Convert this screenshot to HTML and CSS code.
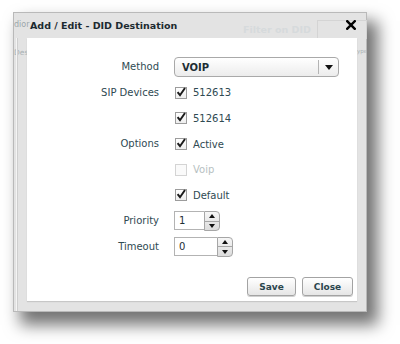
FILE: index.html
```html
<!DOCTYPE html>
<html>
<head>
<meta charset="utf-8">
<link rel="stylesheet" href="styles.css">
</head>
<body>
<div class="dialog">
  <span class="ghost ghost-dior">dior</span>
  <span class="ghost ghost-filter">Filter on DID</span>
  <span class="ghost-box"></span>
  <span class="ghost ghost-des">Des</span>
  <span class="ghost ghost-ype">ype</span>
  <span class="ghost-line"></span>
  <div class="titlebar">
    <span class="title">Add / Edit - DID Destination</span>
    <span class="close"><svg width="10" height="10" viewBox="0 0 10 10"><path d="M1.2 1.2 L8.8 8.8 M8.8 1.2 L1.2 8.8" stroke="#000" stroke-width="2.4" stroke-linecap="square"/></svg></span>
  </div>
  <div class="content">
    <div class="form">
      <div class="label">Method</div>
      <div class="control">
        <div class="select">
          <span class="select-value">VOIP</span>
          <span class="select-arrow"><svg width="8" height="5" viewBox="0 0 8 5"><path d="M0 0 H8 L4 5 Z" fill="#111"/></svg></span>
        </div>
      </div>

      <div class="label">SIP Devices</div>
      <div class="control check-row">
        <span class="checkbox"><svg width="12" height="12" viewBox="0 0 12 12"><path d="M2.6 6.2 L5 9.2 L10 2" fill="none" stroke="#1b1b1b" stroke-width="2"/></svg></span>
        <span class="check-text">512613</span>
      </div>

      <div class="label"></div>
      <div class="control check-row">
        <span class="checkbox"><svg width="12" height="12" viewBox="0 0 12 12"><path d="M2.6 6.2 L5 9.2 L10 2" fill="none" stroke="#1b1b1b" stroke-width="2"/></svg></span>
        <span class="check-text">512614</span>
      </div>

      <div class="label">Options</div>
      <div class="control check-row">
        <span class="checkbox"><svg width="12" height="12" viewBox="0 0 12 12"><path d="M2.6 6.2 L5 9.2 L10 2" fill="none" stroke="#1b1b1b" stroke-width="2"/></svg></span>
        <span class="check-text">Active</span>
      </div>

      <div class="label"></div>
      <div class="control check-row disabled">
        <span class="checkbox"></span>
        <span class="check-text">Voip</span>
      </div>

      <div class="label"></div>
      <div class="control check-row">
        <span class="checkbox"><svg width="12" height="12" viewBox="0 0 12 12"><path d="M2.6 6.2 L5 9.2 L10 2" fill="none" stroke="#1b1b1b" stroke-width="2"/></svg></span>
        <span class="check-text">Default</span>
      </div>

      <div class="label">Priority</div>
      <div class="control">
        <div class="spinner spinner-priority">
          <span class="spin-input">1</span>
          <span class="spin-buttons">
            <span class="spin-btn"><svg width="6" height="4" viewBox="0 0 6 4"><path d="M0 4 H6 L3 0 Z" fill="#111"/></svg></span>
            <span class="spin-btn"><svg width="6" height="4" viewBox="0 0 6 4"><path d="M0 0 H6 L3 4 Z" fill="#111"/></svg></span>
          </span>
        </div>
      </div>

      <div class="label">Timeout</div>
      <div class="control">
        <div class="spinner spinner-timeout">
          <span class="spin-input">0</span>
          <span class="spin-buttons">
            <span class="spin-btn"><svg width="6" height="4" viewBox="0 0 6 4"><path d="M0 4 H6 L3 0 Z" fill="#111"/></svg></span>
            <span class="spin-btn"><svg width="6" height="4" viewBox="0 0 6 4"><path d="M0 0 H6 L3 4 Z" fill="#111"/></svg></span>
          </span>
        </div>
      </div>
    </div>
    <div class="actions">
      <button class="btn btn-save">Save</button>
      <button class="btn btn-close">Close</button>
    </div>
  </div>
</div>
</body>
</html>
```

FILE: styles.css
```css
html, body {
  margin: 0;
  padding: 0;
  background: #ffffff;
}

body {
  font-family: "DejaVu Sans", Verdana, sans-serif;
  font-size: 10px;
  color: #2f4a52;
  width: 400px;
  height: 344px;
  overflow: hidden;
}

.dialog {
  position: relative;
  box-sizing: border-box;
  margin: 12px 0 0 13px;
  width: 354px;
  height: 300px;
  background: #e3e3e3;
  border: 1px solid #b9b9b9;
  display: flex;
  flex-direction: column;
  box-shadow: 9px 11px 15px 2px rgba(0, 0, 0, 0.55);
}

/* faint content of the page beneath, seen through the frame */
.ghost {
  position: absolute;
  white-space: nowrap;
}
.ghost-dior {
  left: 0;
  top: 7px;
  font-size: 8px;
  color: #9ba6aa;
}
.ghost-filter {
  left: 229px;
  top: 11px;
  font-size: 9.5px;
  color: #d6dadc;
  font-weight: bold;
}
.ghost-box {
  position: absolute;
  left: 303px;
  top: 7px;
  width: 48px;
  height: 18px;
  border: 1px solid #d4d4d4;
  border-bottom: none;
}
.ghost-des {
  left: 0;
  top: 35px;
  font-size: 7.5px;
  color: #a9b1b4;
}
.ghost-ype {
  left: 343px;
  top: 35px;
  font-size: 5.5px;
  color: #aab2b5;
}
.ghost-line {
  position: absolute;
  left: 2px;
  top: 25px;
  bottom: 0;
  width: 1px;
  background: #f4f4f4;
  border-right: 1px solid #cfcfcf;
}

.titlebar {
  position: relative;
  height: 25px;
  display: flex;
  align-items: center;
  justify-content: space-between;
  padding: 0 10px 0 16px;
  box-sizing: border-box;
}

.title {
  font-size: 9.5px;
  font-weight: bold;
  color: #1c2a30;
}

.close {
  display: flex;
  width: 10px;
  height: 10px;
  margin-top: -2px;
}

.content {
  position: relative;
  flex: 1;
  margin: 0 9px 10px 13px;
  background: #ffffff;
  display: flex;
  flex-direction: column;
  box-shadow: 0 1px 1px rgba(0, 0, 0, 0.12);
}

.form {
  display: grid;
  grid-template-columns: 132px 1fr;
  column-gap: 15px;
  row-gap: 5.7px;
  padding-top: 19px;
}

.label {
  text-align: right;
  height: 20px;
  line-height: 20px;
  color: #2f4a52;
}

.control {
  height: 20px;
  display: flex;
  align-items: center;
}

.select {
  box-sizing: border-box;
  width: 165px;
  height: 20px;
  border: 1px solid #a9a9a9;
  border-radius: 4px;
  background: linear-gradient(#ffffff, #ececec);
  display: flex;
  align-items: center;
}

.select-value {
  flex: 1;
  padding-left: 7px;
  font-weight: bold;
  color: #1e2e34;
  font-size: 10px;
}

.select-arrow {
  width: 19px;
  height: 14px;
  border-left: 1px solid #b4b4b4;
  display: flex;
  align-items: center;
  justify-content: center;
}

.check-row {
  gap: 6px;
}

.checkbox {
  box-sizing: border-box;
  width: 12px;
  height: 12px;
  margin-left: 1px;
  border: 1px solid #9c9c9c;
  background: linear-gradient(#ffffff, #eeeeee);
  display: flex;
  align-items: center;
  justify-content: center;
  position: relative;
}

.checkbox svg {
  position: absolute;
  left: -1px;
  top: -2px;
}

.check-text {
  color: #2f4a52;
}

.disabled .checkbox {
  border-color: #d4d4d4;
  background: #fafafa;
}

.disabled .check-text {
  color: #b7bfc2;
}

.spinner {
  display: flex;
  height: 20px;
}

.spin-input {
  box-sizing: border-box;
  height: 19px;
  border: 1px solid #b3b3b3;
  border-right: none;
  padding-left: 4px;
  line-height: 17px;
  color: #1e2e34;
  background: #ffffff;
}

.spinner-priority .spin-input {
  width: 30px;
}

.spinner-timeout .spin-input {
  width: 43px;
}

.spin-buttons {
  box-sizing: border-box;
  width: 16px;
  height: 20px;
  border: 1px solid #a6a6a6;
  border-radius: 0 4px 4px 0;
  background: linear-gradient(#f6f6f6, #dcdcdc);
  display: flex;
  flex-direction: column;
  overflow: hidden;
}

.spin-btn {
  flex: 1;
  display: flex;
  align-items: center;
  justify-content: center;
}

.spin-btn + .spin-btn {
  border-top: 1px solid #a6a6a6;
}

.actions {
  margin-top: auto;
  display: flex;
  justify-content: flex-end;
  gap: 6px;
  padding: 0 4px 5px 0;
}

.btn {
  box-sizing: border-box;
  height: 19px;
  padding: 0;
  border: 1px solid #a3a3a3;
  border-radius: 3px;
  background: linear-gradient(#ffffff, #e6e6e6);
  font-family: "DejaVu Sans", Verdana, sans-serif;
  font-size: 9px;
  font-weight: bold;
  color: #2a454d;
  box-shadow: 0 1px 0 #d0d0d0;
}

.btn-save {
  width: 49px;
}

.btn-close {
  width: 51px;
}
```
